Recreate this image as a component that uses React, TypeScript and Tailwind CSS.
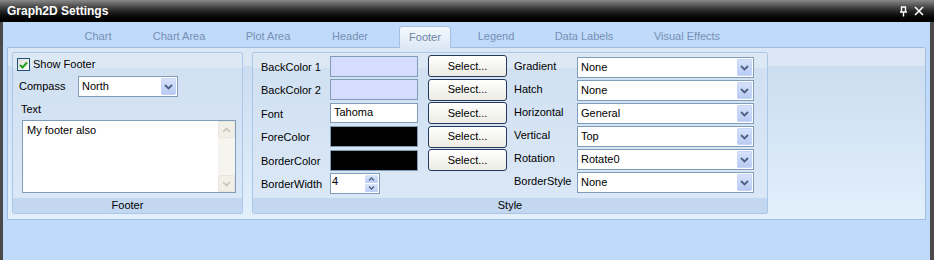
import React from "react"

const tabs = [
  { label: "Chart", cls: "ml-[71px] w-[48px]" },
  { label: "Chart Area", cls: "ml-[20px] w-[74px]" },
  { label: "Plot Area", cls: "ml-[19px] w-[66px]" },
  { label: "Header", cls: "ml-[20px] w-[58px]" },
  { label: "Footer", cls: "ml-[20px] w-[52px]", active: true },
  { label: "Legend", cls: "ml-[16px] w-[58px]" },
  { label: "Data Labels", cls: "ml-[20px] w-[78px]" },
  { label: "Visual Effects", cls: "ml-[21px] w-[86px]" },
]

const colorRows = [
  { label: "BackColor 1", kind: "fill", bg: "bg-[#d5dcfd]" },
  { label: "BackColor 2", kind: "fill", bg: "bg-[#d5dcfd]" },
  { label: "Font", kind: "text", value: "Tahoma" },
  { label: "ForeColor", kind: "fill", bg: "bg-black" },
  { label: "BorderColor", kind: "fill", bg: "bg-black" },
]

const comboRows = [
  { label: "Gradient", value: "None" },
  { label: "Hatch", value: "None" },
  { label: "Horizontal", value: "General" },
  { label: "Vertical", value: "Top" },
  { label: "Rotation", value: "Rotate0" },
  { label: "BorderStyle", value: "None" },
]

function Chevron() {
  return (
    <svg width="9" height="6" viewBox="0 0 9 6">
      <path d="M1 1 L4.5 4.5 L8 1" fill="none" stroke="#4d6185" strokeWidth="1.8" />
    </svg>
  )
}

function Combo({ value, width }: { value: string; width: string }) {
  return (
    <div className={`${width} h-[21px] bg-white border border-[#7f9db9] flex items-center`}>
      <span className="flex-1 pl-[3px] text-[11px] text-black">{value}</span>
      <div className="w-[15px] h-[17px] mr-[1px] rounded-[1px] bg-gradient-to-b from-[#d7e2fb] to-[#b7cbf3] border border-[#c6d5f5] flex items-center justify-center">
        <Chevron />
      </div>
    </div>
  )
}

function SelectButton() {
  return (
    <div className="w-[79px] h-[22px] rounded-[3px] border border-[#24395c] bg-gradient-to-b from-white to-[#ecebe4] flex items-center justify-center text-[11px] text-black">
      Select...
    </div>
  )
}

function Group({ title, className, children }: { title: string; className: string; children: React.ReactNode }) {
  return (
    <div className={`${className} h-[162px] flex flex-col rounded-[2px] border border-[#aac6e9] bg-gradient-to-b from-[#d0e0f1] to-[#dbe8f7] overflow-hidden`}>
      <div className="flex-1 relative">
        <div className="absolute left-0 right-0 top-0 h-[15px] bg-[#dde8f5]" />
        <div className="relative h-full">{children}</div>
      </div>
      <div className="h-[15px] bg-[#c3d8f0] flex items-center justify-center text-[11px] text-black">
        {title}
      </div>
    </div>
  )
}

export default function App() {
  return (
    <div
      className="w-[934px] h-[260px] flex flex-col bg-[#c0dafb] overflow-hidden"
      style={{ fontFamily: '"Liberation Sans", Arial, sans-serif' }}
    >
      {/* title bar */}
      <div className="h-[22px] flex items-center bg-gradient-to-b from-[#8a8a8a] via-[#262626] to-black">
        <span className="ml-[7px] text-[12px] font-bold text-white">Graph2D Settings</span>
        <div className="ml-auto mr-[10px] flex items-center gap-[6px]">
          <svg width="9" height="11" viewBox="0 0 9 11">
            <path d="M2 1 H7 M2.5 1 V6 M6.5 1 V6 M1 6 H8 M4.5 6 V10.5" fill="none" stroke="white" strokeWidth="1.4" />
          </svg>
          <svg width="10" height="10" viewBox="0 0 10 10">
            <path d="M1 1 L9 9 M9 1 L1 9" stroke="white" strokeWidth="1.6" />
          </svg>
        </div>
      </div>

      <div className="flex-1 flex flex-col border-l-[3px] border-r-[4px] border-[#4a4a4a]">
        {/* tabs */}
        <div className="h-[25px] flex items-end">
          {tabs.map((t) =>
            t.active ? (
              <div
                key={t.label}
                className={`${t.cls} h-[22px] -mb-px relative z-10 rounded-t-[3px] border border-b-0 border-[#a5c0e2] bg-gradient-to-b from-[#f4f8fd] to-[#dde8f5] flex items-center justify-center text-[11px] text-[#6d84a2]`}
              >
                {t.label}
              </div>
            ) : (
              <div key={t.label} className={`${t.cls} h-[22px] flex items-center justify-center text-[11px] text-[#7590b3]`}>
                {t.label}
              </div>
            )
          )}
        </div>

        {/* tab panel */}
        <div className="ml-[4px] w-[919px] h-[173px] relative rounded-tr-[3px] border border-[#a0bce0] bg-gradient-to-b from-[#c9dbef] to-[#e3f0fc]">
          <div className="absolute left-0 right-0 top-0 h-[18px] bg-[#dbe7f5]" />
          <div className="relative flex pt-[4px] pl-[4px] gap-[9px]">
            {/* Footer group */}
            <Group title="Footer" className="w-[231px]">
              <div className="flex flex-col pl-[4px] pt-[5px]">
                <div className="flex items-center h-[13px]">
                  <div className="w-[13px] h-[13px] border border-[#1c5180] bg-gradient-to-br from-[#dcdcd6] to-white flex items-center justify-center">
                    <svg width="9" height="8" viewBox="0 0 9 8">
                      <path d="M1 4 L3.5 6.5 L8 1.5" fill="none" stroke="#21a121" strokeWidth="2" />
                    </svg>
                  </div>
                  <span className="ml-[3px] text-[11px] text-black">Show Footer</span>
                </div>
                <div className="flex items-center mt-[5px]">
                  <span className="w-[61px] pl-[2px] text-[11px] text-black">Compass</span>
                  <Combo value="North" width="w-[100px]" />
                </div>
                <span className="mt-[6px] pl-[4px] text-[11px] text-black leading-[13px]">Text</span>
                <div className="mt-[4px] ml-[5px] w-[214px] h-[73px] bg-white border border-[#7f9db9] flex">
                  <span className="flex-1 pl-[4px] pt-[2px] text-[11px] text-black leading-[14px]">My footer also</span>
                  <div className="w-[17px] bg-[#f5f4ef] flex flex-col justify-between">
                    <div className="h-[17px] rounded-[2px] border border-[#e8e6dc] bg-[#f0efe8] flex items-center justify-center">
                      <svg width="9" height="6" viewBox="0 0 9 6">
                        <path d="M1 5 L4.5 1.5 L8 5" fill="none" stroke="#c8c6bc" strokeWidth="1.6" />
                      </svg>
                    </div>
                    <div className="h-[17px] rounded-[2px] border border-[#e8e6dc] bg-[#f0efe8] flex items-center justify-center">
                      <svg width="9" height="6" viewBox="0 0 9 6">
                        <path d="M1 1 L4.5 4.5 L8 1" fill="none" stroke="#c8c6bc" strokeWidth="1.6" />
                      </svg>
                    </div>
                  </div>
                </div>
              </div>
            </Group>

            {/* Style group */}
            <Group title="Style" className="w-[516px]">
              <div className="flex pl-[8px] pt-[2px]">
                <div className="flex flex-col gap-[1.5px]">
                  {colorRows.map((r) => (
                    <div key={r.label} className="flex items-center h-[22px]">
                      <span className="w-[69px] text-[11px] text-black pt-[2px]">{r.label}</span>
                      {r.kind === "text" ? (
                        <div className="w-[88px] h-[20px] bg-white border border-[#7f9db9] pl-[3px] text-[11px] text-black leading-[16px]">
                          {r.value}
                        </div>
                      ) : (
                        <div className={`w-[88px] h-[21px] border border-[#7f9db9] ${r.bg}`} />
                      )}
                      <div className="ml-[10px]">
                        <SelectButton />
                      </div>
                    </div>
                  ))}
                  <div className="flex items-center h-[22px]">
                    <span className="w-[69px] text-[11px] text-black pt-[2px]">BorderWidth</span>
                    <div className="w-[50px] h-[21px] bg-white border border-[#7f9db9] flex">
                      <span className="flex-1 pl-[1px] text-[11px] text-black leading-[14px]">4</span>
                      <div className="w-[15px] flex flex-col gap-px p-px">
                        <div className="flex-1 rounded-[1px] bg-gradient-to-b from-[#dbe5fb] to-[#bccff5] flex items-center justify-center">
                          <svg width="7" height="4" viewBox="0 0 7 4">
                            <path d="M1 3.5 L3.5 1 L6 3.5" fill="none" stroke="#4d6185" strokeWidth="1.4" />
                          </svg>
                        </div>
                        <div className="flex-1 rounded-[1px] bg-gradient-to-b from-[#dbe5fb] to-[#bccff5] flex items-center justify-center">
                          <svg width="7" height="4" viewBox="0 0 7 4">
                            <path d="M1 0.5 L3.5 3 L6 0.5" fill="none" stroke="#4d6185" strokeWidth="1.4" />
                          </svg>
                        </div>
                      </div>
                    </div>
                  </div>
                </div>

                <div className="ml-[7px] flex flex-col gap-[2px] pt-[2px]">
                  {comboRows.map((r) => (
                    <div key={r.label} className="flex items-center h-[21px]">
                      <span className="w-[63px] text-[11px] text-black pb-[2px]">{r.label}</span>
                      <Combo value={r.value} width="w-[177px]" />
                    </div>
                  ))}
                </div>
              </div>
            </Group>
          </div>
        </div>
      </div>
    </div>
  )
}
